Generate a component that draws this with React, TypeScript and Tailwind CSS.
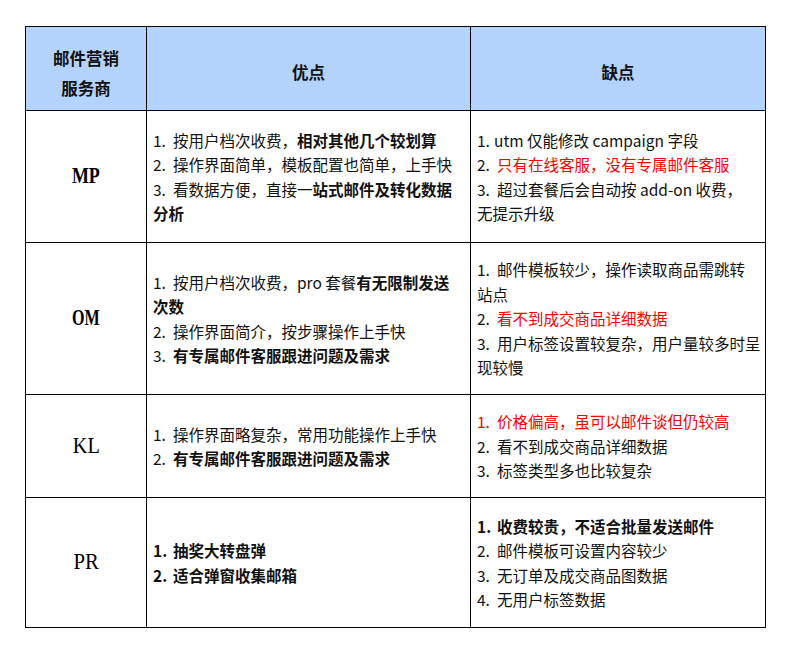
import React from "react";

const N = ({ n, red = false, bold = false }: { n: string; red?: boolean; bold?: boolean }) => (
  <span className={`inline-block w-[20px] ${red ? "text-[#ff0000]" : ""} ${bold ? "font-bold" : ""}`}>{n}</span>
);

const B = ({ children }: { children: React.ReactNode }) => <span className="font-bold">{children}</span>;
const R = ({ children }: { children: React.ReactNode }) => <span className="text-[#ff0000]">{children}</span>;

const Name = ({ children, cls }: { children: React.ReactNode; cls: string }) => (
  <td className="border border-black text-center align-middle">
    <span
      className={`inline-block text-[23px] text-black ${cls}`}
      style={{ fontFamily: '"Liberation Serif", "DejaVu Serif", serif' }}
    >
      {children}
    </span>
  </td>
);

const Cell = ({ children }: { children: React.ReactNode }) => (
  <td className="border border-black align-middle pl-[6px] pr-[2px]">
    <div className="leading-[24.5px] whitespace-nowrap">{children}</div>
  </td>
);

export default function App() {
  return (
    <div
      className="w-[786px] h-[648px] bg-white pt-[26px] pl-[25px] text-[15.5px] text-[#111]"
      style={{ fontFamily: '"Noto Sans CJK SC", "Noto Sans", sans-serif' }}
    >
      <table className="border-collapse table-fixed w-[740px]">
        <colgroup>
          <col className="w-[121px]" />
          <col className="w-[324px]" />
          <col className="w-[295px]" />
        </colgroup>
        <tbody>
          <tr className="h-[84px] bg-[#b4d3fc]">
            <th className="border border-black font-bold text-center align-middle pt-[8px] leading-[30px] text-[16.5px]">
              邮件营销
              <br />
              服务商
            </th>
            <th className="border border-black font-bold text-center align-middle pt-[8px] text-[16.5px]">优点</th>
            <th className="border border-black font-bold text-center align-middle pt-[8px] text-[16.5px]">缺点</th>
          </tr>
          <tr className="h-[132px]">
            <Name cls="font-bold scale-x-[0.78]">MP</Name>
            <Cell>
              <div>
                <N n="1." />按用户档次收费，<B>相对其他几个较划算</B>
              </div>
              <div>
                <N n="2." />操作界面简单，模板配置也简单，上手快
              </div>
              <div>
                <N n="3." />看数据方便，直接一<B>站式邮件及转化数据</B>
                <br />
                <B>分析</B>
              </div>
            </Cell>
            <Cell>
              <div>
                <span className="inline-block w-[17px]">1.</span>utm 仅能修改 campaign 字段
              </div>
              <div>
                <N n="2." />
                <R>只有在线客服，没有专属邮件客服</R>
              </div>
              <div>
                <N n="3." />超过套餐后会自动按 add-on 收费，
                <br />
                无提示升级
              </div>
            </Cell>
          </tr>
          <tr className="h-[152px]">
            <Name cls="font-bold scale-x-[0.7]">OM</Name>
            <Cell>
              <div>
                <N n="1." />按用户档次收费，pro 套餐<B>有无限制发送</B>
                <br />
                <B>次数</B>
              </div>
              <div>
                <N n="2." />操作界面简介，按步骤操作上手快
              </div>
              <div>
                <N n="3." />
                <B>有专属邮件客服跟进问题及需求</B>
              </div>
            </Cell>
            <Cell>
              <div>
                <N n="1." />邮件模板较少，操作读取商品需跳转
                <br />
                站点
              </div>
              <div>
                <N n="2." />
                <R>看不到成交商品详细数据</R>
              </div>
              <div>
                <N n="3." />用户标签设置较复杂，用户量较多时呈
                <br />
                现较慢
              </div>
            </Cell>
          </tr>
          <tr className="h-[103px]">
            <Name cls="scale-x-[0.88]">KL</Name>
            <Cell>
              <div>
                <N n="1." />操作界面略复杂，常用功能操作上手快
              </div>
              <div>
                <N n="2." />
                <B>有专属邮件客服跟进问题及需求</B>
              </div>
            </Cell>
            <Cell>
              <div>
                <N n="1." red />
                <R>价格偏高，虽可以邮件谈但仍较高</R>
              </div>
              <div>
                <N n="2." />看不到成交商品详细数据
              </div>
              <div>
                <N n="3." />标签类型多也比较复杂
              </div>
            </Cell>
          </tr>
          <tr className="h-[130px]">
            <Name cls="scale-x-[0.9]">PR</Name>
            <Cell>
              <div>
                <N n="1." bold />
                <B>抽奖大转盘弹</B>
              </div>
              <div>
                <N n="2." bold />
                <B>适合弹窗收集邮箱</B>
              </div>
            </Cell>
            <Cell>
              <div>
                <N n="1." bold />
                <B>收费较贵，不适合批量发送邮件</B>
              </div>
              <div>
                <N n="2." />邮件模板可设置内容较少
              </div>
              <div>
                <N n="3." />无订单及成交商品图数据
              </div>
              <div>
                <N n="4." />无用户标签数据
              </div>
            </Cell>
          </tr>
        </tbody>
      </table>
    </div>
  );
}
